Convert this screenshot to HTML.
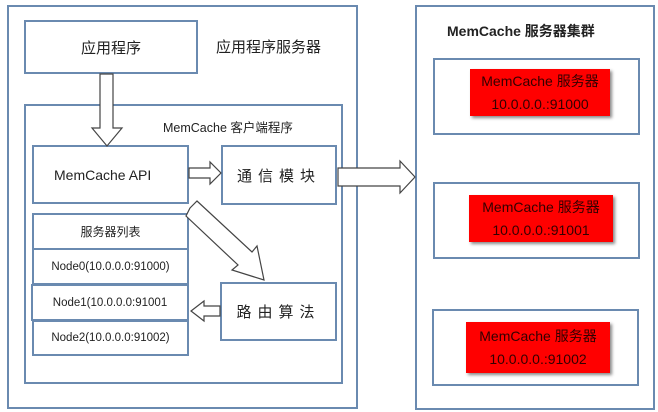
<!DOCTYPE html>
<html><head><meta charset="utf-8"><style>
body{margin:0;width:658px;height:412px;background:#fff;overflow:hidden;position:relative;font-family:"Liberation Sans","Noto Sans CJK SC",sans-serif;color:#222}
.b{position:absolute;border:2px solid #6a8ab0;box-sizing:border-box;background:#fff}
.t{position:absolute;white-space:nowrap;font-size:13px}
.c{display:flex;align-items:center;justify-content:center}
.red{position:absolute;background:#ff0000;box-shadow:2px 2px 3px #888;display:flex;flex-direction:column;align-items:center;justify-content:center;font-size:14px;color:#300;line-height:23px}
</style></head><body>
<div class="b" style="left:7px;top:5px;width:351px;height:404px"></div>
<div class="b c" style="left:24px;top:20px;width:174px;height:54px;font-size:15px">应用程序</div>
<div class="t" style="left:216px;top:36px;font-size:15px">应用程序服务器</div>
<div class="b" style="left:24px;top:104px;width:319px;height:280px"></div>
<div class="t" style="left:163px;top:117px;font-size:12.5px">MemCache 客户端程序</div>
<div class="b c" style="left:32px;top:145px;width:157px;height:59px;font-size:14px;justify-content:flex-start;padding-left:20px">MemCache API</div>
<div class="b c" style="left:221px;top:145px;width:116px;height:60px;font-size:15px;letter-spacing:6px">通信模块</div>
<div class="b c" style="left:32px;top:213px;width:157px;height:37px;font-size:12px">服务器列表</div>
<div class="b c" style="left:32px;top:248px;width:157px;height:37px;font-size:11.5px">Node0(10.0.0.0:91000)</div>
<div class="b c" style="left:31px;top:284px;width:158px;height:37px;font-size:11.5px">Node1(10.0.0.0:91001</div>
<div class="b c" style="left:32px;top:320px;width:157px;height:36px;font-size:11.5px">Node2(10.0.0.0:91002)</div>
<div class="b c" style="left:220px;top:282px;width:117px;height:59px;font-size:15px;letter-spacing:6px">路由算法</div>
<div class="b" style="left:415px;top:5px;width:240px;height:405px"></div>
<div class="t" style="left:447px;top:21px;font-size:14px;font-weight:bold">MemCache 服务器集群</div>
<div class="b" style="left:433px;top:58px;width:207px;height:77px"></div>
<div class="b" style="left:433px;top:182px;width:207px;height:77px"></div>
<div class="b" style="left:432px;top:309px;width:207px;height:77px"></div>
<div class="red" style="left:470px;top:69px;width:140px;height:47px"><span>MemCache 服务器</span><span>10.0.0.0.:91000</span></div>
<div class="red" style="left:469px;top:195px;width:144px;height:47px"><span>MemCache 服务器</span><span>10.0.0.0.:91001</span></div>
<div class="red" style="left:466px;top:322px;width:144px;height:51px"><span>MemCache 服务器</span><span>10.0.0.0.:91002</span></div>
<svg style="position:absolute;left:0;top:0" width="658" height="412">
<g fill="#fff" stroke="#444" stroke-width="1.2">
<polygon points="100,74 113,74 113,128 122,128 107,146 92,128 100,128"/>
<polygon points="189,168 210,168 210,162 221,173 210,184 210,178 189,178"/>
<polygon points="338,168 400,168 400,161 415,177 400,193 400,186 338,186"/>
<polygon points="190,208 197,201 252,252 257,246 264,280 232,270 238,265 186,216"/>
<polygon points="220,306 204,306 204,301 191,311 204,321 204,316 220,316"/>
</g></svg>
</body></html>
